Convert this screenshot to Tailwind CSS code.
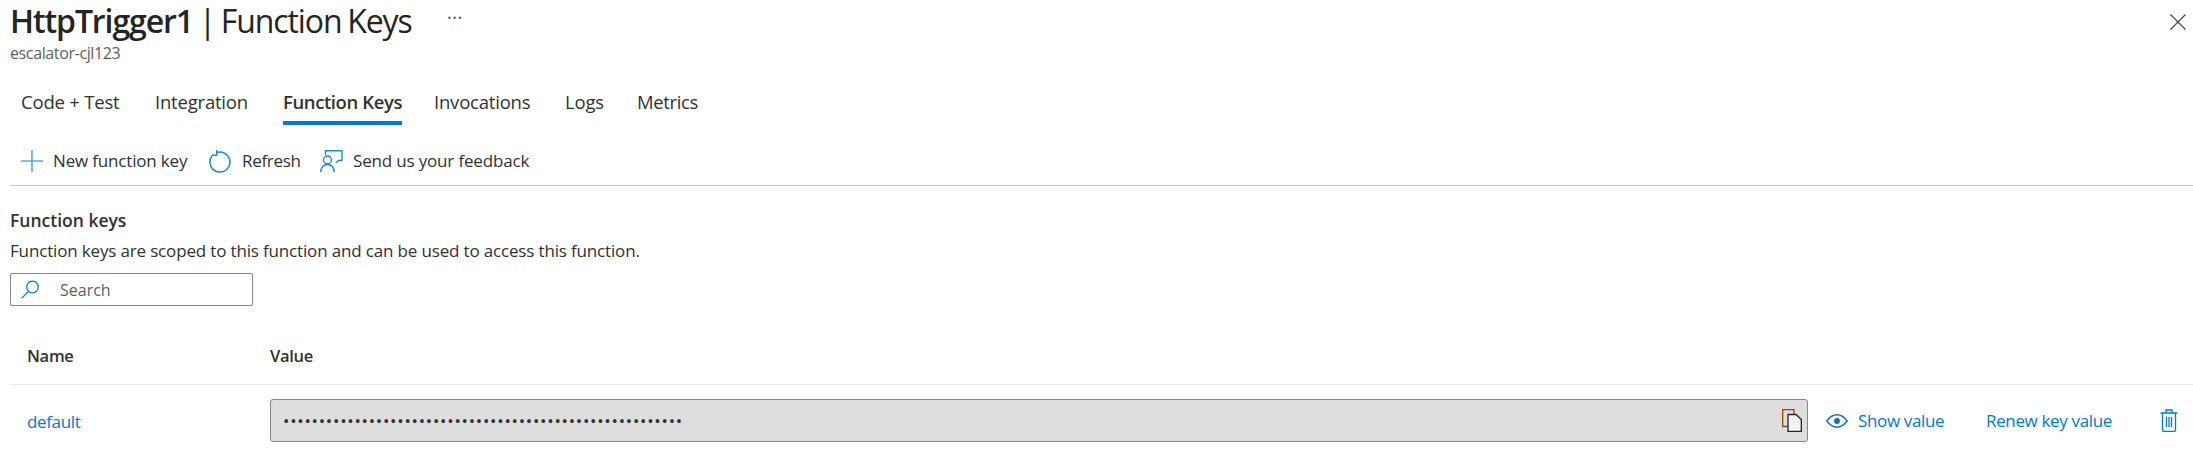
<!DOCTYPE html>
<html lang="en">
<head>
    <meta charset="UTF-8">
    <title>HttpTrigger1 | Function Keys</title>
    <script src="https://cdn.jsdelivr.net/npm/@tailwindcss/browser@4"></script>
</head>
<body class="bg-white text-[#323130] font-['Open_Sans',sans-serif] overflow-hidden">
    <div class="h-[457px] w-[2193px] overflow-hidden">
        <!-- title -->
        <div class="h-[42px] pl-[10px] pr-[7px] flex items-center justify-between">
            <div class="flex items-center">
                <h1 class="text-[32px] leading-[42px] tracking-[-1.1px] [word-spacing:-1.5px] text-[#252423]"><span class="font-semibold">HttpTrigger1</span> | Function Keys</h1>
                <span class="ml-[35px] mb-[6px] text-[20px] leading-none text-[#605e5c]">···</span>
            </div>
            <svg class="w-[16px] h-[16px] mb-[-2px]" viewBox="0 0 16 16" fill="none" stroke="#484644" stroke-width="1.2"><path d="M0.5 0.5l15 15M15.5 0.5l-15 15"/></svg>
        </div>
        <div class="h-[22px] pl-[10px] text-[16px] leading-[22px] tracking-[-0.37px] text-[#605e5c]">escalator-cjl123</div>

        <!-- tabs -->
        <div class="mt-[21px] h-[40px] pl-[21px] flex text-[18.5px] tracking-[-0.2px]">
            <a class="w-[134px] leading-[34px]">Code + Test</a>
            <a class="w-[128px] leading-[34px]">Integration</a>
            <a class="w-[119px] h-[40px] leading-[34px] font-semibold tracking-[-0.4px] whitespace-nowrap border-b-[4px] border-[#0078d4]">Function Keys</a>
            <a class="ml-[32px] w-[131px] leading-[34px]">Invocations</a>
            <a class="w-[72px] leading-[34px]">Logs</a>
            <a class="leading-[34px] tracking-[-0.35px]">Metrics</a>
        </div>

        <!-- toolbar -->
        <div class="h-[61px] ml-[10px] pl-[11px] pt-[18px] border-b border-[#c8c6c4] text-[17px] tracking-[-0.17px]">
            <div class="h-[36px] flex items-center">
                <svg class="w-[22px] h-[22px] text-[#5aa5e6]" viewBox="0 0 22 22" fill="none" stroke="currentColor" stroke-width="1.6"><path d="M0 11h22M11 0v22"/></svg>
                <span class="ml-[10px] w-[135px]">New function key</span>
                <svg class="ml-[21px] w-[23px] h-[23px]" viewBox="0 0 23 23" fill="none" stroke="#1e88d8" stroke-width="1.5"><path d="M8 2.5A10 10 0 1 1 3 6"/><path d="M7.7 0V5.3H2.7"/></svg>
                <span class="ml-[10px] w-[57px] tracking-[-0.3px]">Refresh</span>
                <svg class="ml-[21px] w-[23px] h-[22px]" viewBox="0 0 23 22" fill="none" stroke="#1e88d8" stroke-width="1.4"><path d="M5.5 5V0.8h16.5V10.5h-3.5l-2.5 2.3"/><circle cx="7.5" cy="10" r="4"/><path d="M0.8 22c0-4.5 3-7.5 6.7-7.5s6.7 3 6.7 7.5"/></svg>
                <span class="ml-[10px]">Send us your feedback</span>
            </div>
        </div>

        <!-- section -->
        <div class="pl-[10px]">
            <h2 class="mt-[23px] h-[22px] text-[17.5px] leading-[22px] font-semibold">Function keys</h2>
            <p class="mt-[9px] h-[22px] text-[17px] leading-[22px] tracking-[-0.16px]">Function keys are scoped to this function and can be used to access this function.</p>
            <div class="mt-[11px] w-[243px] h-[33px] flex items-center border border-[#8a8886] rounded-[2px] pl-[10px]">
                <svg class="w-[19px] h-[19px]" viewBox="0 0 19 19" fill="none" stroke="#0078d4" stroke-width="1.2"><circle cx="11.5" cy="7" r="5.8"/><path d="M7.5 11.5L0.8 18.2"/></svg>
                <span class="ml-[20px] text-[16px] text-[#605e5c]">Search</span>
            </div>
        </div>

        <!-- table -->
        <div class="ml-[10px] mt-[32px] h-[47px] flex items-center pl-[17px] border-b border-[#e9e8e7] text-[16.5px] font-semibold tracking-[-0.3px]">
            <div class="w-[243px] pb-[10px]">Name</div>
            <div class="pb-[10px]">Value</div>
        </div>
        <div class="ml-[10px] mt-[14px] h-[43px] flex items-center pl-[17px] text-[#0078d4] text-[17px] tracking-[-0.35px]">
            <a class="w-[243px] pt-[2px]">default</a>
            <div class="w-[1538px] h-[43px] flex items-center justify-between bg-[#dedede] border border-[#8a8886] rounded-[3px] pl-[12px] pr-[5px]">
                <span class="text-[#323130] text-[17px] tracking-[0.75px]">••••••••••••••••••••••••••••••••••••••••••••••••••••••••</span>
                <svg class="w-[20px] h-[23px]" viewBox="0 0 20 23" fill="none" stroke-width="1.3"><path d="M12 5V0.7H0.7V17.5H6" stroke="#8a4b10"/><path d="M6 5.5h8l5.3 5v11.8H6z" fill="#f3f2f1" stroke="#252423"/></svg>
            </div>
            <svg class="ml-[18px] w-[22px] h-[14px]" viewBox="0 0 22 14" fill="none" stroke="#106ebe" stroke-width="1.4"><path d="M0.8 7C4 2.8 7.2 0.8 11 0.8S18 2.8 21.2 7C18 11.2 14.8 13.2 11 13.2S4 11.2 0.8 7z"/><circle cx="11" cy="7" r="2.2" fill="#106ebe"/></svg>
            <span class="ml-[10px] w-[128px] pt-[1px]">Show value</span>
            <span class="w-[174px]">Renew key value</span>
            <svg class="w-[18px] h-[23px]" viewBox="0 0 18 23" fill="none" stroke="#0078d4" stroke-width="1.3"><path d="M0.5 4h17M6 4V1h6v3M2.5 4v17a1.3 1.3 0 0 0 1.3 1.3h10.4a1.3 1.3 0 0 0 1.3-1.3V4M6.5 8v10M9 8v10M11.5 8v10"/></svg>
        </div>
    </div>
</body>
</html>
